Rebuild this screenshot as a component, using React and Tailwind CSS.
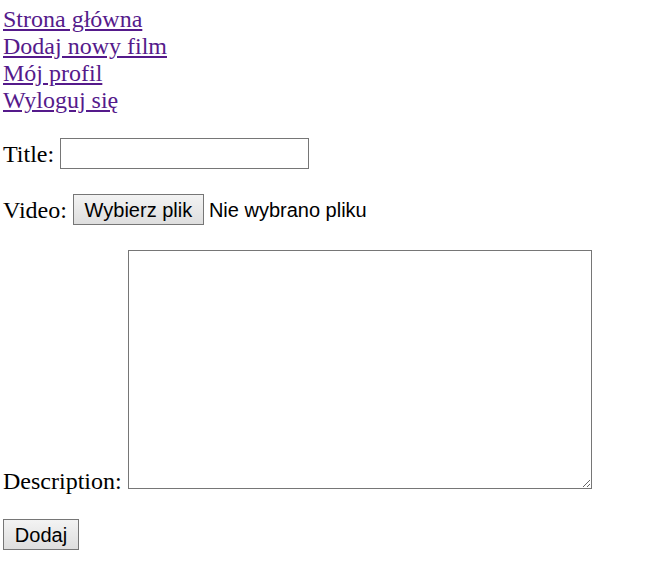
import React from "react";

const links = ["Strona główna", "Dodaj nowy film", "Mój profil", "Wyloguj się"];

const serif = "font-['Liberation_Serif','Times_New_Roman',serif] text-[24px] leading-[27px] text-black";
const sans = "font-['Liberation_Sans',Arial,sans-serif] text-[20px] text-black";
const btn =
  "h-[31px] flex items-center justify-center border border-[#767676] bg-gradient-to-b from-[#f3f3f3] to-[#dedede] leading-none";

export default function App() {
  return (
    <div className="min-h-screen bg-white pl-[3px] pt-[6px]">
      <nav className={serif}>
        {links.map((l) => (
          <div key={l}>
            <a href="#" className="text-[#551a8b] underline">
              {l}
            </a>
          </div>
        ))}
      </nav>

      <div className="mt-[24px] flex items-center gap-[6px]">
        <span className={`${serif} mt-[1px]`}>Title:</span>
        <input type="text" className="w-[249px] h-[31px] border border-[#767676] bg-white outline-none" />
      </div>

      <div className="mt-[25px] flex items-center gap-[6px]">
        <span className={`${serif} mt-[1px]`}>Video:</span>
        <button type="button" className={`${btn} ${sans} w-[131px]`}>
          Wybierz plik
        </button>
        <span className={`${sans} -ml-px`}>Nie wybrano pliku</span>
      </div>

      <div className="mt-[25px] flex items-end gap-[6px]">
        <span className={`${serif} mb-[-6px]`}>Description:</span>
        <textarea className="block w-[464px] h-[239px] border border-[#767676] bg-white outline-none" />
      </div>

      <button type="button" className={`${btn} ${sans} mt-[30px] w-[76px]`}>
        Dodaj
      </button>
    </div>
  );
}
